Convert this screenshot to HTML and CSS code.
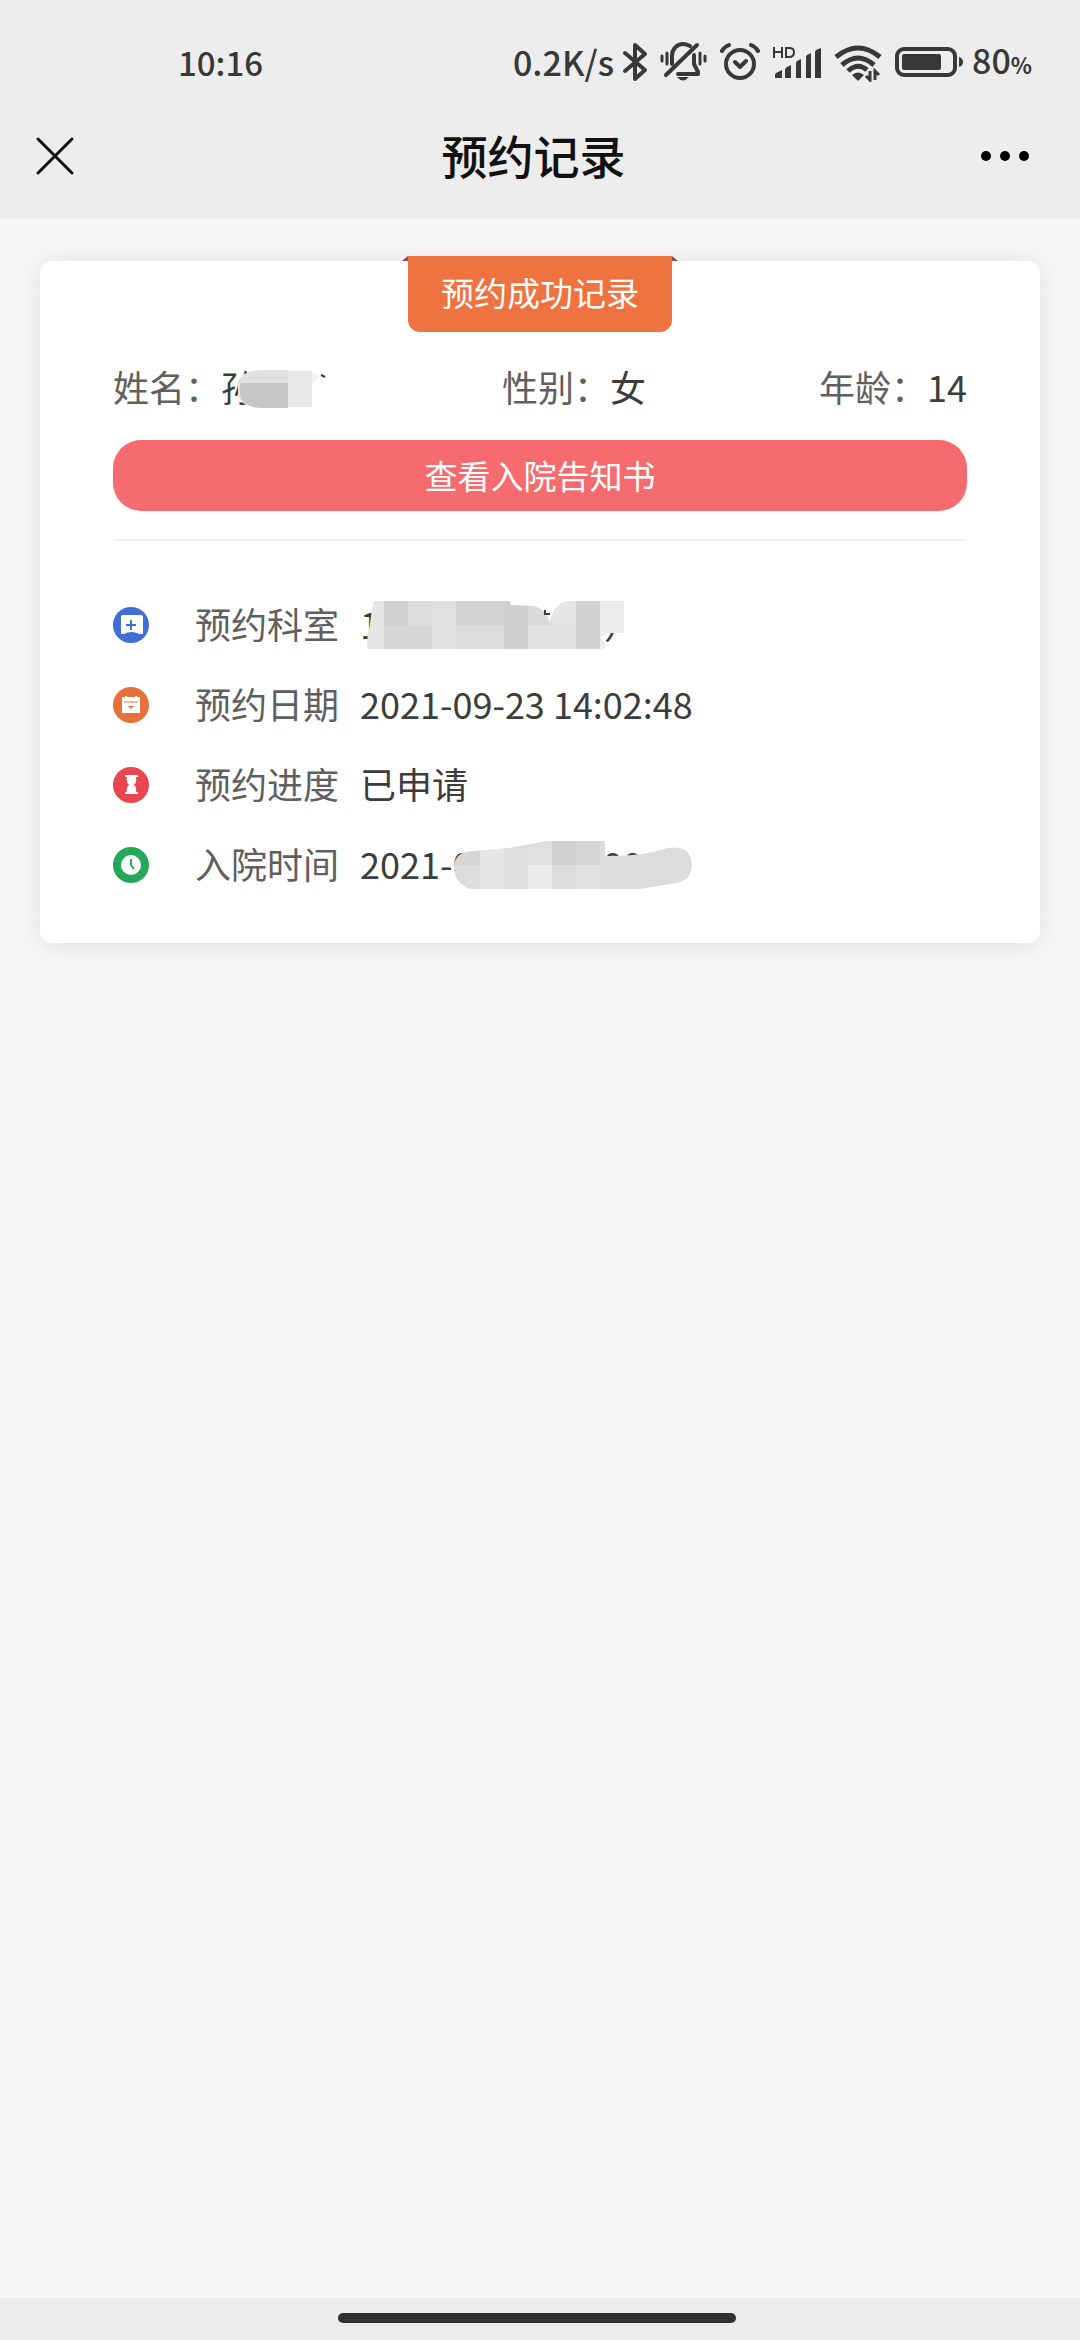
FILE: index.html
```html
<!DOCTYPE html>
<html lang="zh-CN">
<head>
	<meta charset="UTF-8">
	<meta name="viewport" content="width=device-width, initial-scale=1">
	<title>预约记录</title>
	<link rel="stylesheet" href="styles.css">
</head>
<body>
	<header class="top">
		<div class="status">
			<span class="status_time">10:16</span>
			<div class="status_icons">
				<div class="status_group">
					<span>0.2K/s</span>
					<svg width="26" height="40" viewBox="0 0 26 40" fill="none" stroke="#383838" stroke-width="4" stroke-linejoin="round" stroke-linecap="round">
						<path d="M3 11L23 28L13 37V3L23 12L3 29"/>
					</svg>
				</div>
				<svg width="48" height="40" viewBox="0 0 48 40" fill="none" stroke="#383838" stroke-width="3" stroke-linecap="round">
					<path d="M6 33L37 3" stroke-width="4"/>
					<path d="M12 22V14C12 7 17 2 23 2C26 2 28 3 30 4" stroke-width="4"/>
					<path d="M34 13V22L38 30V32H18" stroke-width="4" stroke-linejoin="round"/>
					<path d="M17 35H29Q23 42 17 35Z" fill="#383838" stroke="none"/>
					<path d="M2 14V19M7 11V22M40 11V22M45 14V19"/>
				</svg>
				<svg width="40" height="40" viewBox="0 0 40 40" fill="none" stroke="#383838" stroke-width="4" stroke-linecap="round" stroke-linejoin="round">
					<circle cx="20" cy="22" r="14"/>
					<path d="M15 20L20 25L26 19M2 9Q4 5 9 3M38 9Q36 5 31 3"/>
				</svg>
				<svg width="50" height="40" viewBox="0 0 50 40" fill="#383838">
					<path d="M2 5V16M10 5V16M2 10H10M14 6V15H17Q22 15 22 10Q22 6 17 6Z" fill="none" stroke="#383838" stroke-width="2"/>
					<path d="M3 36V33Q3 32 4 31L10 28V36ZM13 36V28Q13 26 15 25L19 23V36ZM24 36V21Q24 20 25 19L29 17V36ZM34 36V15Q34 14 35 13L39 11V36ZM43 36V10Q43 9 44 8L49 6V36Z"/>
				</svg>
				<svg width="48" height="40" viewBox="0 0 48 40" fill="none" stroke="#383838" stroke-width="5">
					<path d="M2 15Q24 -3 46 15M8 23Q24 9 40 23M14 29Q24 20 33 28"/>
					<path d="M18 33Q24 28 30 33L24 39Z" fill="#383838" stroke="none"/>
					<path d="M36 29V38L32 34M41 38V29L45 33" stroke-width="3"/>
				</svg>
				<div class="status_group">
					<svg width="70" height="40" viewBox="0 0 70 40" fill="#383838">
						<rect x="3" y="7" width="58" height="26" rx="7" fill="none" stroke="#383838" stroke-width="4"/>
						<rect x="8" y="12" width="39" height="16" rx="2"/>
						<path d="M65 15Q69 16 69 20Q69 24 65 25Z"/>
					</svg>
					<span>80<small>%</small></span>
				</div>
			</div>
		</div>
		<div class="nav">
			<button type="button" class="nav_close" aria-label="关闭">
				<svg width="40" height="40" viewBox="0 0 40 40" stroke="#111" stroke-width="3" stroke-linecap="round">
					<path d="M3 3L37 37M37 3L3 37"/>
				</svg>
			</button>
			<h1 class="nav_title">预约记录</h1>
			<button type="button" class="nav_more" aria-label="更多">
				<svg width="48" height="10" viewBox="0 0 48 10">
					<circle cx="5" cy="5" r="5"/>
					<circle cx="24" cy="5" r="5"/>
					<circle cx="43" cy="5" r="5"/>
				</svg>
			</button>
		</div>
	</header>
	<main class="wrapper">
		<section class="card">
			<h2 class="card_tag">预约成功记录</h2>
			<div class="user">
				<div>姓名：<span class="value">孙<span class="blank_name"></span>
					<svg class="mosaic" width="108" height="48" viewBox="0 0 108 48">
						<path d="M17 19Q20 6 42 6H67V44H42Q20 44 17 30Z" fill="#e0e0e0"/>
						<path d="M19 19H67V44H42Q22 44 19 30Z" fill="#c6c6c6"/>
						<path d="M67 7H91V43H67Z" fill="#e8e8e8"/>
						<path d="M91 8L99 12L91 19Z" fill="#f3f3f3"/>
						<path d="M100 11L104 13" stroke="#3c3c3c" stroke-width="2"/>
					</svg>
				</span></div>
				<div>性别：<span class="value">女</span></div>
				<div>年龄：<span class="value">14</span></div>
			</div>
			<button type="button" class="notice">查看入院告知书</button>
			<dl class="list">
				<div class="item">
					<svg width="36" height="36" viewBox="0 0 36 36">
						<circle cx="18" cy="18" r="18" fill="#3f6fd4"/>
						<path d="M9 8H28Q30 8 30 10V27L26 27Q18 23 11 27H8V9Z" fill="#fff"/>
						<path d="M18 13V23M13 18H23" stroke="#3f6fd4" stroke-width="2"/>
					</svg>
					<dt>预约科室</dt>
					<dd>1<span class="blank_dept"></span>）
						<svg class="mosaic" width="264" height="48" viewBox="0 0 264 48">
							<clipPath id="dept"><path d="M14 0H150V4L172 5Q186 7 190 22Q193 2 208 0H264V32H247L240 36L245 42V48H10Q6 48 7 40Q10 24 12 8Z"/></clipPath>
							<g clip-path="url(#dept)">
								<path d="M0 0H264V48H0Z" fill="#e6e6e6"/>
								<path d="M24 0H48V24H24Z" fill="#d0d0d0"/>
								<path d="M48 0H72V24H48Z" fill="#dcdcdc"/>
								<path d="M72 0H96V48H72Z" fill="#e0e0e0"/>
								<path d="M96 0H144V24H96Z" fill="#d3d3d3"/>
								<path d="M24 24H72V48H24Z" fill="#d6d6d4"/>
								<path d="M96 24H144V48H96Z" fill="#dcdcda"/>
								<path d="M144 0H168V48H144Z" fill="#cfcfcf"/>
								<path d="M168 0H192V24H168Z" fill="#d9d9d9"/>
								<path d="M168 24H216V48H168Z" fill="#e1e1e2"/>
								<path d="M216 0H240V48H216Z" fill="#d1d1d1"/>
								<path d="M240 0H264V48H240Z" fill="#ececec"/>
							</g>
							<path d="M185 9V13H190" fill="none" stroke="#3c3c3c" stroke-width="2"/>
						</svg>
					</dd>
				</div>
				<div class="item">
					<svg width="36" height="36" viewBox="0 0 36 36">
						<circle cx="18" cy="18" r="18" fill="#e5713b"/>
						<path d="M9 10H12V9H14V10H22V9H24V10H27V26H9Z" fill="#fff"/>
						<path d="M11 15H25" stroke="#e5713b" stroke-width="1"/>
						<path d="M15 19H21L18 22Z" fill="#e5713b"/>
					</svg>
					<dt>预约日期</dt>
					<dd>2021-09-23 14:02:48</dd>
				</div>
				<div class="item">
					<svg width="36" height="36" viewBox="0 0 36 36">
						<circle cx="18" cy="18" r="18" fill="#e8474f"/>
						<path d="M12 8H25V10H23Q24 15 21 18Q24 20 23 25H25V27H12V25H14Q13 20 16 18Q13 15 14 10H12Z" fill="#fff"/>
					</svg>
					<dt>预约进度</dt>
					<dd>已申请</dd>
				</div>
				<div class="item">
					<svg width="36" height="36" viewBox="0 0 36 36">
						<circle cx="18" cy="18" r="18" fill="#24a95b"/>
						<circle cx="18" cy="18" r="10" fill="#fff"/>
						<path d="M18 12V18L21 22" fill="none" stroke="#24a95b" stroke-width="2"/>
					</svg>
					<dt>入院时间</dt>
					<dd>2021-00-00 00:00
						<svg class="mosaic" width="336" height="48" viewBox="0 0 336 48">
							<clipPath id="stay"><path d="M94 26Q95 10 115 10L150 7L188 0H245V15Q280 16 308 7Q331 4 332 24Q331 40 316 42L280 48H110Q94 42 94 26Z"/></clipPath>
							<g clip-path="url(#stay)">
								<path d="M90 0H336V48H90Z" fill="#dcdcdc"/>
								<path d="M90 0H120V24H90Z" fill="#d5d5d5"/>
								<path d="M120 0H144V48H120Z" fill="#e6e6e6"/>
								<path d="M144 0H168V48H144Z" fill="#dedede"/>
								<path d="M168 0H192V24H168Z" fill="#e0e0e0"/>
								<path d="M168 24H192V48H168Z" fill="#ebebe9"/>
								<path d="M192 0H216V24H192Z" fill="#d0d0d0"/>
								<path d="M216 0H240V24H216Z" fill="#d5d5d5"/>
								<path d="M216 24H240V48H216Z" fill="#e0e0e0"/>
							</g>
						</svg>
					</dd>
				</div>
			</dl>
		</section>
	</main>
	<footer class="home"><div class="home_bar"></div></footer>
</body>
</html>
```

FILE: styles.css
```css
*{
	margin:0;
	padding:0;
	box-sizing: border-box;
}
body{
	display: flex;
	flex-direction: column;
	min-height: 100vh;
	background: #f7f7f7;
	color: #5f5f5f;
	font-family: "Noto Sans CJK SC", sans-serif;
	font-size: 36px;
}
svg{
	display: block;
	flex: none;
}
button{
	border: 0;
	background: none;
	font-family: inherit;
	cursor: pointer;
}

/* 顶部 */
.top{
	background: #ededed;
}
.status{
	display: flex;
	align-items: center;
	justify-content: space-between;
	height: 92px;
	padding: 32px 48px 0 178px;
	color: #383838;
	font-size: 34px;
	font-weight: 500;
	line-height: 40px;
}
.status_time{
	font-size: 33px;
}
.status small{
	font-size: 22px;
	font-weight: 700;
}
.status_icons{
	display: flex;
	align-items: center;
	gap: 12px;
}
.status_group{
	display: flex;
	align-items: center;
	gap: 8px;
}
.nav{
	display: flex;
	align-items: center;
	height: 127px;
	padding: 0 51px 0 24px;
}
.nav_close{
	display: flex;
	justify-content: center;
	width: 62px;
}
.nav_title{
	flex: 1;
	padding-bottom: 4px;
	color: #111;
	font-size: 46px;
	font-weight: 500;
	line-height: 54px;
	text-align: center;
}

/* 预约卡片 */
.wrapper{
	flex: 1;
	padding: 42px 40px;
}
.card{
	padding: 0 73px 38px;
	border-radius: 12px;
	background: #fff;
	box-shadow: 0 2px 24px rgba(0, 0, 0, 0.1);
}
.card_tag{
	position: relative;
	top: -5px;
	width: fit-content;
	margin: 0 auto;
	padding: 0 33px 4px;
	border-radius: 0 0 12px 12px;
	background: #ee7340;
	color: #fff;
	font-size: 33px;
	font-weight: 400;
	line-height: 72px;
}
.card_tag:before,
.card_tag:after{
	content: "";
	position: absolute;
	top: 0;
	border-bottom: 5px solid #8f4d45;
}
.card_tag:before{
	right: 100%;
	border-left: 6px solid transparent;
}
.card_tag:after{
	left: 100%;
	border-right: 6px solid transparent;
}
.user{
	display: flex;
	justify-content: space-between;
	margin: 22px 0 27px;
	line-height: 54px;
}
.value{
	display: inline-block;
	position: relative;
	color: #3c3c3c;
	line-height: 48px;
}
.mosaic{
	position: absolute;
	top: 2px;
	left: 0;
}
.blank_name{
	display: inline-block;
	width: 72px;
}
.blank_dept{
	display: inline-block;
	width: 224px;
}
.notice{
	display: block;
	width: 100%;
	border-radius: 28px;
	background: #f56b6e;
	color: #fff;
	font-size: 33px;
	line-height: 71px;
}
.list{
	margin-top: 28px;
	padding-top: 44px;
	border-top: 2px solid #eee;
}
.item{
	display: flex;
	align-items: center;
	height: 80px;
	line-height: 48px;
}
.item dt{
	margin: 0 21px 0 46px;
	padding-bottom: 4px;
}
.item dd{
	position: relative;
	padding-bottom: 4px;
	color: #3c3c3c;
}

/* 底部横条 */
.home{
	padding: 15px 6px 17px 0;
	background: #ededed;
}
.home_bar{
	width: 37%;
	height: 10px;
	margin: 0 auto;
	border-radius: 5px;
	background: #303030;
}
```
